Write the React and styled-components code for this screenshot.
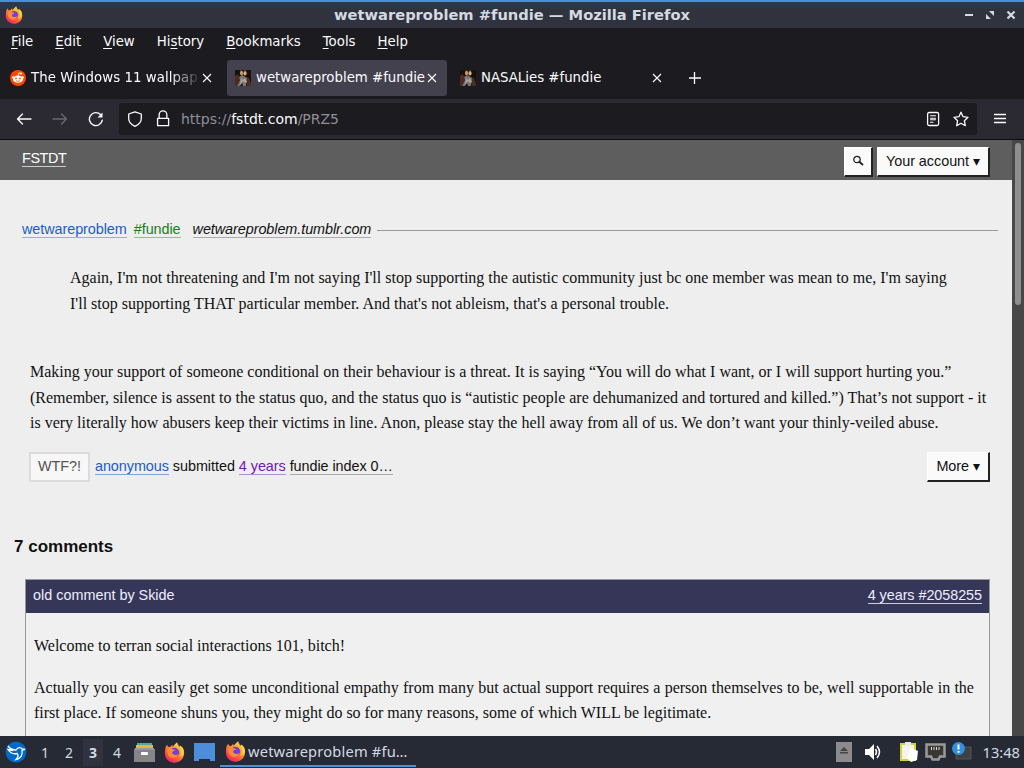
import React from 'react';
import styled, { createGlobalStyle } from 'styled-components';

const GlobalStyle = createGlobalStyle`
    * { box-sizing: border-box; }
    body {
        margin: 0;
        overflow: hidden;
        background: #1c1b20;
    }
`;

const Desktop = styled.div`
    width: 1024px;
    height: 768px;
    display: flex;
    flex-direction: column;
    overflow: hidden;
    font-family: 'DejaVu Sans', sans-serif;
    font-size: 13.33px;
    color: #fbfbfe;
    svg { display: block; flex: none; }
`;

/* window frame */

const TitleBar = styled.header`
    height: 28px;
    flex: none;
    display: grid;
    grid-template-columns: 60px 1fr 62px;
    align-items: center;
    border-top: 2px solid #4a90d9;
    background: linear-gradient(#2c3a4c, #30333d 30%, #30333d);
    padding-left: 5px;
`;

const WindowTitle = styled.div`
    text-align: center;
    font-weight: bold;
    font-size: 14.67px;
    line-height: 20px;
    padding-right: 3px;
    color: #d3dae3;
    white-space: nowrap;
`;

const WindowButtons = styled.div`
    display: flex;
    gap: 11px;
    align-items: center;
    padding-left: 2px;
`;

const MenuBar = styled.nav`
    height: 28px;
    flex: none;
    display: flex;
    align-items: center;
    gap: 22px;
    padding: 0 0 2px 11px;
    background: #1c1b20;
`;

const MenuItem = styled.span`
    white-space: nowrap;
    u { text-underline-offset: 2px; text-decoration-thickness: 1px; }
`;

const TabStrip = styled.div`
    height: 43px;
    flex: none;
    display: flex;
    align-items: center;
    gap: 5px;
    padding: 0 2px 0 2px;
    background: #1c1b20;
`;

const Tab = styled.div`
    width: 220px;
    height: 36px;
    display: flex;
    align-items: center;
    padding: 0 10px 0 8px;
    border-radius: 3px;
    background: ${({ $active }) => ($active ? '#42414d' : 'transparent')};
`;

const TabLabel = styled.span`
    flex: 1;
    min-width: 0;
    padding-left: 5px;
    overflow: hidden;
    white-space: nowrap;
    line-height: 20px;
    letter-spacing: ${({ $fade }) => ($fade ? '0.06px' : '-0.01px')};
    mask-image: ${({ $fade }) => ($fade ? 'linear-gradient(to right, #000 82%, transparent)' : 'none')};
`;

const NewTab = styled.div`
    padding-left: 12px;
`;

const NavBar = styled.div`
    height: 41px;
    flex: none;
    display: flex;
    align-items: center;
    background: #2b2a32;
    border-bottom: 1px solid #0c0c0d;
    padding: 0 16px;
`;

const NavButtons = styled.div`
    width: 103px;
    display: flex;
    gap: 20px;
`;

const UrlField = styled.div`
    width: 858px;
    height: 32px;
    display: flex;
    align-items: center;
    padding: 0 8px;
    border-radius: 3px;
    background: #1c1b20;
`;

const Url = styled.span`
    flex: 1;
    padding-left: 4px;
    font-size: 14px;
    color: #8f8f98;
    b { font-weight: normal; color: #fbfbfe; }
`;

const FieldIcons = styled.div`
    display: flex;
    gap: 12px;
`;

const LockSlot = styled.div`
    padding-left: 6px;
`;

const MenuButton = styled.div`
    padding-left: 15px;
`;

/* web page */

const Viewport = styled.div`
    height: 596px;
    flex: none;
    display: flex;
`;

const Page = styled.main`
    width: 1012px;
    overflow: hidden;
    background: #eee;
    color: #111;
    font-family: 'Liberation Sans', Arial, sans-serif;
    font-size: 14.4px;
`;

const ScrollTrack = styled.div`
    width: 12px;
    background: #474747;
    padding: 3px;
`;

const ScrollThumb = styled.div`
    width: 6px;
    height: 162px;
    border-radius: 3px;
    background: #8f8f8f;
`;

const SiteHeader = styled.div`
    height: 40px;
    display: flex;
    align-items: center;
    justify-content: space-between;
    padding: 0 22px;
    background: #5e5e5e;
`;

const Link = styled.a`
    color: ${({ $color }) => $color || '#111'};
    border-bottom: 1px solid ${({ $line }) => $line || '#aaa'};
    line-height: 16px;
    letter-spacing: -0.06px;
    white-space: nowrap;
`;

const SiteName = styled(Link)`
    margin-top: -3px;
    letter-spacing: -0.4px;
`;

const HeaderActions = styled.div`
    display: flex;
    gap: 4px;
    padding-top: 3px;
`;

const Button = styled.div`
    height: 30px;
    display: flex;
    align-items: center;
    padding: ${({ $tight }) => ($tight ? '0 7px' : '0 8px')};
    background: #fafafa;
    border: 1px solid #fff;
    border-right: 2px solid #222;
    border-bottom: 2px solid #222;
    color: #111;
    letter-spacing: -0.03px;
    white-space: nowrap;
`;

const Article = styled.article`
    padding: 41px 14px 0 22px;
`;

const Byline = styled.div`
    display: flex;
    align-items: center;
    height: 17px;
`;

const Source = styled(Link)`
    font-style: italic;
    margin: 0 6px 0 12px;
`;

const Tag = styled(Link)`
    margin-left: 7px;
`;

const Rule = styled.div`
    flex: 1;
    height: 1px;
    margin-top: 2px;
    background: #999;
`;

const Prose = styled.p`
    margin: 0;
    font-family: 'Liberation Serif', 'Times New Roman', serif;
    font-size: 16px;
    line-height: 25.6px;
    white-space: nowrap;
`;

const Quote = styled(Prose)`
    padding: 27px 0 0 48px;
`;

const Reply = styled(Prose)`
    padding: 43px 0 0 8px;
`;

const Meta = styled.div`
    display: flex;
    align-items: center;
    justify-content: space-between;
    padding: 16px 8px 0 7px;
`;

const MetaInfo = styled.div`
    display: flex;
    align-items: baseline;
    gap: 4px;
    letter-spacing: -0.04px;
`;

const VoteButton = styled.div`
    height: 30px;
    padding: 4px 7px 0;
    margin-right: 1px;
    border: 2px solid #dcdcdc;
    background: #f7f7f7;
    color: #555;
`;

const CommentsTitle = styled.h2`
    margin: 0;
    padding: 55px 0 0 14px;
    font-size: 17px;
    line-height: 20px;
`;

const Comment = styled.section`
    margin: 22px 22px 0 25px;
    height: 400px;
    border: 1px solid #999;
    background: #f0f0f0;
`;

const CommentHeader = styled.div`
    height: 33px;
    display: flex;
    align-items: baseline;
    justify-content: space-between;
    padding: 7px 7px 0 7px;
    background: #363659;
    color: #eef;
`;

const CommentBody = styled.div`
    padding: 20px 8px;
    display: flex;
    flex-direction: column;
    gap: 16px;
`;

const WideLine = styled.span`
    word-spacing: 0.25px;
`;

/* desktop panel */

const Panel = styled.footer`
    height: 32px;
    flex: none;
    display: flex;
    align-items: center;
    background: #262a35;
    color: #d3dae3;
    font-family: 'Noto Sans', sans-serif;
    font-size: 14.67px;
    padding: 0 4px 0 5px;
`;

const Workspace = styled.div`
    width: ${({ $current }) => ($current ? 20 : 24)}px;
    margin: 0 ${({ $current }) => ($current ? 2 : 0)}px;
    height: 27px;
    line-height: 27px;
    font-size: 14px;
    text-align: center;
    font-weight: ${({ $current }) => ($current ? 'bold' : 'normal')};
    background: ${({ $current }) => ($current ? '#30333f' : 'transparent')};
`;

const Workspaces = styled.div`
    display: flex;
    padding-left: 6px;
`;

const Launchers = styled.div`
    display: flex;
    align-items: center;
    gap: 9px;
    padding-left: 5px;
`;

const Task = styled.div`
    width: 196px;
    height: 30px;
    display: flex;
    align-items: center;
    gap: 2px;
    margin: 0 auto 0 5px;
    padding-left: 5px;
    border-bottom: 2px solid #4a90d9;
    letter-spacing: 0.18px;
    white-space: nowrap;
`;

const Tray = styled.div`
    display: flex;
    align-items: center;
`;

const Clock = styled.div`
    padding-left: 11px;
`;

const FirefoxLogo = ({ size, id }) => (
    <svg width={size} height={size} viewBox="0 0 20 20">
        <defs>
            <linearGradient id={id} x1="0.85" y1="0" x2="0.2" y2="1">
                <stop offset="0" stopColor="#fff04a" />
                <stop offset="0.4" stopColor="#ff9a2e" />
                <stop offset="0.75" stopColor="#ff4845" />
                <stop offset="1" stopColor="#e8217c" />
            </linearGradient>
        </defs>
        <path fill={`url(#${id})`} d="M1.8 4.4 3 2.6l.8 2 2 .2L8 2.5l.2 2.2C9 4 10 2.3 12.5.3c0 2.1 1.2 3.1 2.5 4.6l.2-1.5c3.2 2.7 4.6 6 3.8 9.3-1 4.3-4.5 7-9 7-5.2 0-9-3.8-9.1-8.8-.1-2.6.3-4.8.9-6.5z" />
        <circle cx="10" cy="10" r="4.5" fill="#7340d7" />
        <path fill="#ff8b35" d="M3 7.200c1.600-1.400 3.200-1.400 4.800-.3l2.700.5c-.1 1.200-2.300 1.300-2.800 2.200-.4 2.500 3.500 3.800 6.100 1.500-1 4.600-7.600 5.500-9.600 1.700C3.200 11 2.600 9 3 7.200z" />
        <path fill="#ffd33c" d="M12.500.3c0 2.800 3.700 4.400 3.900 8.300.1 2.500-.9 4.300-2.100 5.600 3.400-.8 4.800-3.500 4.500-6.400-.3-1.700-1.500-3.300-3.600-4.400L15 4.900z" />
    </svg>
);

const Favicon = () => (
    <svg width="16" height="16" viewBox="0 0 16 16">
        <rect width="16" height="16" fill="#17100f" />
        <path d="M0 6 3 4l2 5-3 7H0zM11 7l3 1 2 5v3h-4z" fill="#4f2c22" />
        <path d="M4 7 7 5l2 1 3 2-1 8H8l-1-3-2 3H2l3-6z" fill="#77736f" />
        <path d="m6 8 2 2 2-2 2 4-2 1-2-2-3 4z" fill="#aaa6a1" />
        <ellipse cx="6.5" cy="3" rx="1.6" ry="2.3" fill="#c99868" />
        <ellipse cx="10" cy="3.3" rx="1.6" ry="2.3" fill="#d7ad78" />
        <path d="M5 1.2 7 .2M9 1l2-.5" stroke="#69452e" />
    </svg>
);

const RedditIcon = () => (
    <svg width="16" height="16" viewBox="0 0 16 16">
        <circle cx="8" cy="8" r="8" fill="#ff4500" />
        <path d="m8 6 .7-3 2.3.5" fill="none" stroke="#fff" strokeWidth=".8" />
        <circle cx="11.2" cy="3.6" r="1" fill="#fff" />
        <circle cx="3.4" cy="7.5" r="1.3" fill="#fff" />
        <circle cx="12.6" cy="7.5" r="1.3" fill="#fff" />
        <ellipse cx="8" cy="9.2" rx="5" ry="3.6" fill="#fff" />
        <circle cx="6" cy="8.5" r=".9" fill="#ff4500" />
        <circle cx="10" cy="8.5" r=".9" fill="#ff4500" />
        <path d="M6 10.8q2 1.2 4 0" fill="none" stroke="#ff4500" strokeWidth=".8" />
    </svg>
);

const Line = ({ size = 16, w = 1.3, color = '#fbfbfe', children }) => (
    <svg width={size} height={size} viewBox="0 0 16 16" fill="none" stroke={color}
        strokeWidth={w} strokeLinecap="round" strokeLinejoin="round">
        {children}
    </svg>
);

const CloseIcon = () => (
    <svg width="10" height="10" viewBox="0 0 10 10" stroke="#fbfbfe" strokeWidth="1.1">
        <path d="m1 1 8 8M9 1 1 9" />
    </svg>
);

const menus = [['', 'F', 'ile'], ['', 'E', 'dit'], ['', 'V', 'iew'], ['Hi', 's', 'tory'], ['', 'B', 'ookmarks'], ['', 'T', 'ools'], ['', 'H', 'elp']];

const Browser = () => (
    <>
        <TitleBar>
            <FirefoxLogo size={18} id="fxTitle" />
            <WindowTitle>wetwareproblem #fundie — Mozilla Firefox</WindowTitle>
            <WindowButtons>
                <svg width="10" height="10"><path d="M1 5h8" stroke="#d3dae3" strokeWidth="2" /></svg>
                <svg width="10" height="10" fill="#d3dae3"><path d="M4 1h5v5zM1 4v5h5z" /></svg>
                <svg width="10" height="10" stroke="#d3dae3" strokeWidth="2.2"><path d="m1.5 1.5 7 7M8.5 1.5l-7 7" /></svg>
            </WindowButtons>
        </TitleBar>
        <MenuBar>
            {menus.map(([before, key, after]) => (
                <MenuItem key={key + after}>{before}<u>{key}</u>{after}</MenuItem>
            ))}
        </MenuBar>
        <TabStrip>
            <Tab><RedditIcon /><TabLabel $fade>The Windows 11 wallpap</TabLabel><CloseIcon /></Tab>
            <Tab $active><Favicon /><TabLabel>wetwareproblem #fundie</TabLabel><CloseIcon /></Tab>
            <Tab><Favicon /><TabLabel>NASALies #fundie</TabLabel><CloseIcon /></Tab>
            <NewTab>
                <svg width="12" height="12" stroke="#fbfbfe" strokeWidth="1.3"><path d="M5.5 0v12M0 6h12" /></svg>
            </NewTab>
        </TabStrip>
        <NavBar>
            <NavButtons>
                <Line><path d="M15 8H1.5M6.5 3l-5 5 5 5" /></Line>
                <Line color="#6a6972"><path d="M1 8h13.5M9.5 3l5 5-5 5" /></Line>
                <Line w={1.4}><path d="M14.3 9.2A6.5 6.5 0 1 1 12.5 3.5" /><path d="M14.5 1.5v5h-5z" fill="#fbfbfe" stroke="none" /></Line>
            </NavButtons>
            <UrlField>
                <Line><path d="M8 .8 14.3 3v4.3c0 3.6-2.3 6.3-6.3 8-4-1.7-6.3-4.4-6.3-8V3z" /></Line>
                <LockSlot>
                    <Line size={28}><path d="M4.9 7.6h6.3v4.2H4.9zM5.8 7.5V5.6a2.2 2.2 0 0 1 4.4 0v1.9" strokeWidth=".75" /></Line>
                </LockSlot>
                <Url>https://<b>fstdt.com</b>/PRZ5</Url>
                <FieldIcons>
                    <Line><rect x="2.6" y="1.5" width="11" height="13" rx="1.5" /><path d="M5.5 4.7h5M5.5 7.2h5M5.5 8.8h5M5.5 11.2H8" strokeWidth="1.1" /></Line>
                    <Line><path d="m8 1.2 2.1 4.5 4.9.6-3.6 3.4.9 5L8 12.3l-4.3 2.4.9-5L1 6.3l4.9-.6z" /></Line>
                </FieldIcons>
            </UrlField>
            <MenuButton>
                <Line><path d="M2.5 3.5h11M2.5 7.5h11M2.5 11.5h11" /></Line>
            </MenuButton>
        </NavBar>
    </>
);

const Site = () => (
    <Viewport>
        <Page>
            <SiteHeader>
                <SiteName $color="#fff" $line="#ccc">FSTDT</SiteName>
                <HeaderActions>
                    <Button $tight>
                        <svg width="12" height="12" fill="none" stroke="#222" strokeWidth="1.3"><circle cx="5" cy="4.5" r="3.2" /><path d="m7 6.5 4 3.5" strokeWidth="1.8" /></svg>
                    </Button>
                    <Button>Your account ▾</Button>
                </HeaderActions>
            </SiteHeader>
            <Article>
                <Byline>
                    <Link $color="#1a5dc8" $line="#8fb0e0">wetwareproblem</Link>
                    <Tag $color="#188018" $line="#8cc08c">#fundie</Tag>
                    <Source>wetwareproblem.tumblr.com</Source>
                    <Rule />
                </Byline>
                <Quote>
                    Again, I'm not threatening and I'm not saying I'll stop supporting the autistic community just bc one member was mean to me, I'm saying<br />
                    I'll stop supporting THAT particular member. And that's not ableism, that's a personal trouble.
                </Quote>
                <Reply>
                    Making your support of someone conditional on their behaviour is a threat. It is saying “You will do what I want, or I will support hurting you.”<br />
                    (Remember, silence is assent to the status quo, and the status quo is “autistic people are dehumanized and tortured and killed.”) That’s not support - it<br />
                    is very literally how abusers keep their victims in line. Anon, please stay the hell away from all of us. We don’t want your thinly-veiled abuse.
                </Reply>
                <Meta>
                    <MetaInfo>
                        <VoteButton>WTF?!</VoteButton>
                        <Link $color="#1a5dc8" $line="#7ea4dd">anonymous</Link>
                        <span>submitted</span>
                        <Link $color="#7316b8" $line="#b58bd6">4 years</Link>
                        <Link>fundie index 0…</Link>
                    </MetaInfo>
                    <Button>More ▾</Button>
                </Meta>
            </Article>
            <CommentsTitle>7 comments</CommentsTitle>
            <Comment>
                <CommentHeader>
                    <span>old comment by Skide</span>
                    <Link $color="#eef" $line="#ccd">4 years #2058255</Link>
                </CommentHeader>
                <CommentBody>
                    <Prose>Welcome to terran social interactions 101, bitch!</Prose>
                    <Prose>
                        <WideLine>Actually you can easily get some unconditional empathy from many but actual support requires a person themselves to be, well supportable in the</WideLine><br />
                        first place. If someone shuns you, they might do so for many reasons, some of which WILL be legitimate.
                    </Prose>
                </CommentBody>
            </Comment>
        </Page>
        <ScrollTrack><ScrollThumb /></ScrollTrack>
    </Viewport>
);

const DesktopPanel = () => (
    <Panel>
        <svg width="22" height="22" viewBox="0 0 22 22">
            <circle cx="11" cy="11" r="10.5" fill="#0068c8" />
            <path d="M3 5c3 4 6 4 8 4 2-3 5-3 6-1l3 .5-3 1c1 4-1 8-6 9 2-2 3-4 1-6-4 1-7-1-9-4l5 1c-3-1-4-3-5-4.500z" fill="none" stroke="#fff" strokeWidth="1.3" />
        </svg>
        <Workspaces>
            {[1, 2, 3, 4].map((n) => <Workspace key={n} $current={n === 3}>{n}</Workspace>)}
        </Workspaces>
        <Launchers>
            <svg width="21" height="21">
                <path d="M3 1h15v3H3z" fill="#50a89e" />
                <path d="M2 3h17v4H2z" fill="#d5bd52" />
                <path d="M0 7h21v13H0z" fill="#858585" />
                <path d="M1 6h19v2H1z" fill="#999" />
                <rect x="7" y="10" width="7" height="3" rx="1" fill="#fff" />
            </svg>
            <FirefoxLogo size={21} id="fxLaunch" />
            <svg width="21" height="18"><path d="M0 0h21v18h-5v-2H5v2H0z" fill="#4c8edb" /></svg>
        </Launchers>
        <Task>
            <FirefoxLogo size={21} id="fxTask" />
            wetwareproblem #fu…
        </Task>
        <Tray>
            <svg width="16" height="20"><rect width="16" height="20" fill="#8b8b8b" /><path d="m8 5 4 4H4zM4 10h8v1.5H4z" fill="#444" /></svg>
            <svg width="46" height="20">
                <path d="M13 7h4l5-5v16l-5-5h-4z" fill="#fff" />
                <path d="M23.5 7q2 3 0 6M25 4q5 6 0 12" fill="none" stroke="#fff" strokeWidth="1.5" />
            </svg>
            <svg width="27" height="22">
                <path d="M2 2h16v18H2z" fill="#d4d33a" />
                <path d="M4 4h12v14H4z" fill="#f4f4ec" />
                <path d="M7 1h6v4H7z" fill="#e9e9e9" />
                <path d="m13 7 7 3-1 9-6 2-4-4z" fill="#fff" />
            </svg>
            <svg width="26" height="20">
                <path d="M1.500 2.500h18v12H15l-1.500 3h-6L6 14.500H1.500z" fill="#3a3834" stroke="#9a9a9a" strokeWidth="2.5" />
                <path d="M6 5h1v3H6zM8.500 5h1v3h-1zM11 5h1v3h-1zM13.500 5h1v3h-1z" fill="#ddd" />
            </svg>
            <svg width="21" height="22">
                <path d="M7 6h13v12H5v-5z" fill="#3b4144" stroke="#545647" />
                <circle cx="7.5" cy="7.5" r="6.5" fill="#368fdd" />
                <path d="M7.5 3.5v5M7.5 10v1.8" stroke="#fff" strokeWidth="2" />
            </svg>
            <Clock>13:48</Clock>
        </Tray>
    </Panel>
);

export default function App() {
    return (
        <Desktop>
            <GlobalStyle />
            <Browser />
            <Site />
            <DesktopPanel />
        </Desktop>
    );
}
